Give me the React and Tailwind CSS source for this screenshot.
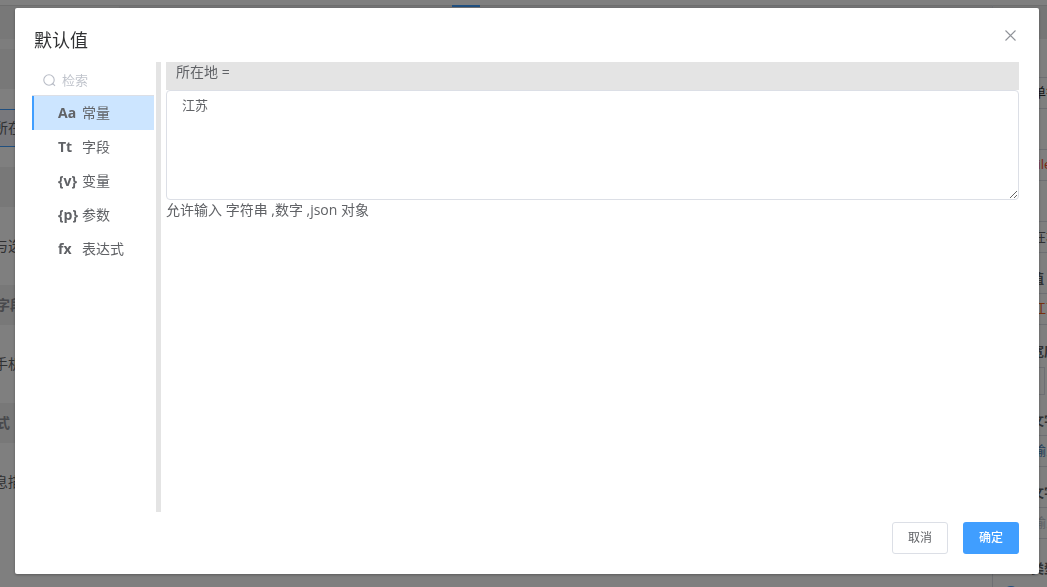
import React from 'react';
import clsx from 'clsx';

const kinds = [
  { id: 'const', mark: 'Aa', label: '常量' },
  { id: 'field', mark: 'Tt', label: '字段' },
  { id: 'var', mark: '{v}', label: '变量' },
  { id: 'param', mark: '{p}', label: '参数' },
  { id: 'expr', mark: 'fx', label: '表达式' },
];

const SearchIcon = () => (
  <svg width="13" height="13" viewBox="0 0 13 13" fill="none" stroke="#b8bcc6" strokeWidth="1.1">
    <circle cx="6" cy="6" r="5.2" />
    <path d="M8.8 10.4 L9.8 9.6 L12 11.8" />
  </svg>
);

const CloseIcon = () => (
  <svg width="11" height="11" viewBox="0 0 11 11" fill="none" stroke="#909399" strokeWidth="1.1">
    <path d="M0.5 0.5 L10.5 10.5 M10.5 0.5 L0.5 10.5" />
  </svg>
);

const FormRow = ({ children, active }) => (
  <div
    className={clsx(
      'h-[38px] flex items-center border-y text-sm text-[#606266] whitespace-nowrap',
      active ? 'border-[#409eff] bg-[#f0f0f8]' : 'border-transparent'
    )}
  >
    <span className="-ml-1.5">{children}</span>
  </div>
);

const FormGroup = ({ children }) => (
  <div className="h-10 flex items-center bg-[#f0f0f0] text-sm font-bold text-[#909399] whitespace-nowrap">
    <span className="-ml-1">{children}</span>
  </div>
);

const PropTitle = ({ children, className }) => (
  <div
    className={clsx(
      'flex items-center pt-3 text-[13px] font-bold text-[#606266] whitespace-nowrap',
      className
    )}
  >
    <span className="ml-[38px]">{children}</span>
  </div>
);

const PropValue = ({ children, className }) => (
  <div
    className={clsx(
      'h-8 flex items-center border-y border-[#dcdfe6] text-[13px] whitespace-nowrap overflow-hidden',
      className
    )}
  >
    <span className="ml-10">{children}</span>
  </div>
);

const Designer = () => (
  <div className="h-screen overflow-hidden bg-white flex flex-col" aria-hidden="true">
    <div className="h-[5px] shrink-0" />
    <div className="flex flex-1 min-h-0">
      <div className="w-[119px] shrink-0 border-t border-[#dcdcdc]">
        <div className="h-[33px] bg-[#f0f0f0]" />
        <div className="h-2.5 bg-[#fafafa]" />
        <div className="h-10 bg-[#f0f0f0]" />
        <div className="h-5" />
        <FormRow active>所在地</FormRow>
        <div className="h-5" />
        <FormGroup />
        <div className="h-5" />
        <FormRow>与选择</FormRow>
        <div className="h-5" />
        <FormGroup>字段</FormGroup>
        <div className="h-5" />
        <FormRow>手机号</FormRow>
        <div className="h-5" />
        <FormGroup>式</FormGroup>
        <div className="h-5" />
        <FormRow>息描述</FormRow>
      </div>
      <div className="flex-1 flex justify-center items-start border-t border-[#dcdcdc] bg-linear-to-b from-[#e8e8ea] from-1% to-white to-1%">
        <div className="w-7 h-0.5 mr-[180px] -mt-px bg-[#409eff]" />
      </div>
      <div className="w-[55px] shrink-0 border-l border-[#dcdfe6]">
        <div className="h-[34px] border-t border-[#dcdcdc] bg-[#ececec]" />
        <div className="h-[38px]" />
        <PropValue className="text-[#303133]">单行文本</PropValue>
        <div className="h-10" />
        <PropValue className="text-[#f5501c]">file</PropValue>
        <div className="h-10" />
        <PropValue className="text-[#606266]">在地</PropValue>
        <PropTitle className="h-10">值</PropTitle>
        <PropValue className="text-[#f5601c]">江苏</PropValue>
        <PropTitle className="h-[42px]">宽度</PropTitle>
        <div className="h-7 mr-0.5 border-y border-r border-[#dcdfe6]" />
        <PropTitle className="h-10">文字</PropTitle>
        <PropValue className="text-[#4a7fb5]">输入</PropValue>
        <PropTitle className="h-10">文字</PropTitle>
        <PropValue className="text-[#c0c4cc]">输入</PropValue>
        <PropTitle className="h-[47px]">类型</PropTitle>
        <div className="ml-2.5 w-4 h-4 rounded-full bg-[#409eff]" />
      </div>
    </div>
  </div>
);

const DefaultValueDialog = () => {
  const [kind, setKind] = React.useState('const');
  const [keyword, setKeyword] = React.useState('');
  const [value, setValue] = React.useState('江苏');

  const visible = kinds.filter((k) => k.label.includes(keyword));

  return (
    <div className="fixed inset-0 flex bg-black/50 pt-2 pr-2 pb-[13px] pl-[15px]">
      <div
        role="dialog"
        aria-labelledby="dialog-title"
        className="flex-1 min-w-0 flex flex-col rounded-xs bg-white shadow-[0_1px_3px_rgba(0,0,0,0.3)]"
      >
        <header className="h-[54px] shrink-0 flex items-start justify-between pl-[19px] pr-[23px] pt-5">
          <h1 id="dialog-title" className="text-lg leading-6 text-[#303133]">默认值</h1>
          <button type="button" aria-label="关闭" className="mt-0.5">
            <CloseIcon />
          </button>
        </header>

        <div className="flex-1 min-h-0 flex pl-[17px] pr-5">
          <nav className="w-[122px] shrink-0">
            <label className="h-[34px] flex items-center gap-1.5 pl-[11px] pt-1 border-b border-[#dcdfe6]">
              <SearchIcon />
              <input
                type="text"
                aria-label="检索"
                placeholder="检索"
                value={keyword}
                onChange={(e) => setKeyword(e.target.value)}
                className="w-20 text-[13px] text-[#606266] placeholder:text-[#c0c4cc] outline-none"
              />
            </label>
            {visible.map((k) => (
              <button
                key={k.id}
                type="button"
                onClick={() => setKind(k.id)}
                className={clsx(
                  'w-full h-[34px] flex items-center border-l-2 pl-6 text-sm text-left text-[#606266]',
                  kind === k.id ? 'border-[#409eff] bg-[#cce5ff]' : 'border-transparent'
                )}
              >
                <b className="w-6 font-bold">{k.mark}</b>
                <span>{k.label}</span>
              </button>
            ))}
          </nav>

          <div className="w-[5px] shrink-0 ml-0.5 mr-[5px] bg-[#e4e4e4]" />

          <section className="flex-1 min-w-0 text-sm text-[#606266]">
            <label htmlFor="default-value" className="block h-7 pl-2.5 leading-5 bg-[#e4e4e4]">
              所在地 =
            </label>
            <textarea
              id="default-value"
              value={value}
              onChange={(e) => setValue(e.target.value)}
              className="block w-full h-[110px] px-[15px] py-1 rounded border border-[#dcdfe6] bg-white text-[13px] leading-5 resize-y outline-none"
            />
            <p className="leading-5">允许输入 字符串 ,数字 ,json 对象</p>
          </section>
        </div>

        <footer className="shrink-0 flex justify-end gap-[15px] px-5 pt-2.5 pb-5 text-xs">
          <button type="button" className="w-14 h-8 rounded-[3px] border border-[#dcdfe6] bg-white text-[#606266]">
            取消
          </button>
          <button type="button" className="w-14 h-8 rounded-[3px] bg-[#409eff] font-medium text-white">
            确定
          </button>
        </footer>
      </div>
    </div>
  );
};

export default function App() {
  return (
    <div className="font-['Open_Sans','Noto_Sans_CJK_SC',sans-serif]">
      <Designer />
      <DefaultValueDialog />
    </div>
  );
}
